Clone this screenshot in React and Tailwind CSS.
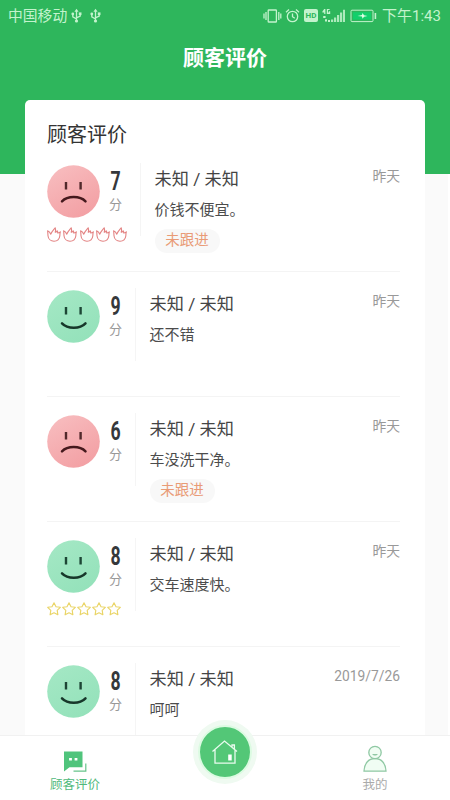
const reviews = [
  { id: 1, score: 7, mood: 'sad', text: '价钱不便宜。', date: '昨天', pending: true, marks: 'flame' },
  { id: 2, score: 9, mood: 'happy', text: '还不错', date: '昨天' },
  { id: 3, score: 6, mood: 'sad', text: '车没洗干净。', date: '昨天', pending: true },
  { id: 4, score: 8, mood: 'happy', text: '交车速度快。', date: '昨天', marks: 'star' },
  { id: 5, score: 8, mood: 'happy', text: '呵呵', date: '2019/7/26' },
];

function UsbIcon() {
  return (
    <svg width="11" height="16" viewBox="0 0 11 16" fill="none" stroke="currentColor" strokeWidth="1.3">
      <path d="M5.5 2.5V13M5.5 11L1.8 8.8V6M5.5 9.8L9.2 8V5.5" />
      <path d="M5.5 .8L7.6 3.8H3.4Z" fill="currentColor" stroke="none" />
      <circle cx="1.8" cy="6" r="1.4" fill="currentColor" stroke="none" />
      <path d="M7.8 4.4h2.7v2.7H7.8z" fill="currentColor" stroke="none" />
      <circle cx="5.5" cy="13" r="1.6" fill="currentColor" stroke="none" />
    </svg>
  );
}

function StatusBar() {
  return (
    <div className="flex h-[31px] items-center pl-2 pr-[11px] text-[14.8px] leading-none text-[#c3f3cd]">
      <span className="w-[59px] whitespace-nowrap pt-0.5">中国移动</span>
      <span className="ml-[4px] flex gap-2">
        <UsbIcon />
        <UsbIcon />
      </span>
      <div className="ml-auto flex items-center">
        <svg width="19" height="16" viewBox="0 0 19 16" fill="none" stroke="currentColor" strokeWidth="1.3">
          <rect x="5.2" y="2" width="8.2" height="12" rx=".6" />
          <path d="M3 4v8M15.8 4v8M1 5.5v5M17.8 5.5v5" />
        </svg>
        <svg className="ml-[3px]" width="15" height="16" viewBox="0 0 15 16" fill="none" stroke="currentColor" strokeWidth="1.3">
          <circle cx="7.5" cy="8.5" r="5.2" />
          <path d="M7.5 5.5v3.2l2.3 1.5M1 4.2L4 1.6M14 4.2L11 1.6" />
        </svg>
        <span className="ml-[4px] flex h-[13px] w-[14px] items-center justify-center rounded-[2px] bg-[#c3f3cd] text-[8px] font-bold text-[#2eb65c]">
          HD
        </span>
        <svg className="ml-1" width="24" height="16" viewBox="0 0 24 16" fill="currentColor">
          <path d="M3.4 1v5H2.2V4.6H.4V3.6L2.2 1zM4.8 1h2.8v1.1H6v2.3h.8V3.2h1.4V6H4.8z" />
          <path d="M1.2 8h2.4v2H1.2zM3 11.2h2v2.4H3zM6 12h2v2H6z" />
          <path d="M9 11.5h2.2V14H9zM12 9.5h2.2V14H12zM15 7h2.2v7H15zM18 4.5h2.2V14H18zM21 1.8h2V14h-2z" opacity=".85" />
        </svg>
        <svg className="ml-[4px]" width="27" height="14" viewBox="0 0 27 14" fill="none" stroke="currentColor">
          <rect x="1" y="1.2" width="22" height="11.4" rx="1" />
          <rect x="3" y="3.2" width="18" height="7.4" fill="#12cf6b" stroke="none" />
          <path d="M25.4 4v6" strokeWidth="1.6" />
          <path d="M7.5 7l4.5-1 .5-2 1.5 2.3L17.5 7 14 7.8l-1.5 2L12 7.6z" fill="#e3ffe6" stroke="none" />
        </svg>
        <span className="ml-[5px] w-[57px] whitespace-nowrap pt-0.5 text-[15px]">下午1:43</span>
      </div>
    </div>
  );
}

function Face({ mood }) {
  const sad = mood === 'sad';
  return (
    <svg className="block" width="53" height="53" viewBox="0 0 53 53" fill="none" strokeLinecap="round">
      <defs>
        <linearGradient id={`face-${mood}`} x1="0" y1="0" x2=".6" y2="1">
          <stop offset="0" stopColor={sad ? '#f8bfc1' : '#a5e8c5'} />
          <stop offset="1" stopColor={sad ? '#f3a1a5' : '#95e2bb'} />
        </linearGradient>
      </defs>
      <circle cx="26.5" cy="26.5" r="26.3" fill={`url(#face-${mood})`} />
      <path d="M19 17v7.4M33.6 17v7.4" stroke={sad ? '#51292b' : '#1d4535'} strokeWidth="2.4" strokeLinecap="butt" />
      {sad ? (
        <path d="M15 36.3C20.5 30.6 33 30.6 38.5 36.3" stroke="#45191d" strokeWidth="2.5" />
      ) : (
        <path d="M15 33.3C20.5 39.2 33 39.2 38.5 33.3" stroke="#17372a" strokeWidth="2.5" />
      )}
    </svg>
  );
}

function FlameIcon() {
  return (
    <svg width="14" height="15" viewBox="0 0 14 15" fill="none" stroke="#e38383" strokeWidth="1.1" strokeLinejoin="round">
      <path d="M8.2 .8C8.8 2.6 8.6 4 8.2 5.2C9 5.4 9.8 4.8 10.2 3.8C10.8 4.6 10.8 5.2 10.6 6C11.6 6 12.6 5.5 13.4 4.8C12.8 6 13 7.2 12.8 9C12.4 12.3 9.8 14.2 7 14.2C3.8 14.2 1.2 12 1 8.8C.9 7 .8 5.4 .6 3.8C2.1 4.4 3.2 5.6 3.8 7.2C4.6 4.8 6.4 3.2 8.2 .8Z" />
    </svg>
  );
}

function StarIcon() {
  return (
    <svg width="14" height="14" viewBox="0 0 14 14" fill="none" stroke="#ead568" strokeWidth="1.15" strokeLinejoin="round">
      <path d="M7 .8L9 4.7L13.3 5.3L10.2 8.4L10.9 12.8L7 10.8L3.1 12.8L3.8 8.4L.7 5.3L5 4.7Z" />
    </svg>
  );
}

function Marks({ type }) {
  const Icon = type === 'flame' ? FlameIcon : StarIcon;
  return (
    <div className={type === 'flame' ? 'mt-[9px] flex gap-[2.4px]' : 'mt-[9px] flex gap-px'}>
      {[0, 1, 2, 3, 4].map((n) => (
        <Icon key={n} />
      ))}
    </div>
  );
}

function ReviewRow({ review }) {
  return (
    <li className="flex h-[125px] border-b border-[#f4f4f4] pt-4">
      <div className={review.marks === 'flame' ? 'w-[93px] pt-0.5' : 'w-[88px] pt-0.5'}>
        <div className="flex">
          <Face mood={review.mood} />
          <div className="ml-[9px] flex w-[13px] flex-col items-center pt-[3px]">
            <span className="scale-x-[.68] font-[Roboto] text-[26px] font-bold leading-[26px] text-[#35383b]">{review.score}</span>
            <span className="mt-[3px] text-[13px] leading-[15px] text-[#999]">分</span>
          </div>
        </div>
        {review.marks && <Marks type={review.marks} />}
      </div>
      <div className="h-[73px] w-px bg-[#f5f5f5]" />
      <div className="ml-[13.5px] flex-1">
        <div className="flex justify-between">
          <h3 className="pt-1 text-[17.2px] leading-6 text-[#444]">未知 / 未知</h3>
          <time className="pt-px text-[13.8px] leading-6 text-[#999]">{review.date}</time>
        </div>
        <p className="mt-[8px] text-[15px] leading-[22px] text-[#4c4c4c]">{review.text}</p>
        {review.pending && (
          <span className="mt-[8px] flex h-6 w-[65px] items-center justify-center rounded-full bg-[#f8f8f8] pt-px text-[14.5px] leading-none text-[#e99b76]">
            未跟进
          </span>
        )}
      </div>
    </li>
  );
}

function BottomNav() {
  return (
    <nav className="relative flex h-[65px] shrink-0 justify-between border-t border-[#f1f1f1] bg-white">
      <a className="flex w-[150px] flex-col items-center pt-[15px] text-[12.5px] text-[#50b97b]">
        <svg width="24" height="22" viewBox="0 0 24 22" fill="none">
          <path d="M1 .5h18.5v15.8H6.5L1 20.5z" fill="#50c47c" />
          <path d="M6.1 8.2h2.8M11.6 8.2h2.8" stroke="#fff" strokeWidth="2.6" />
          <path d="M22.8 12.5v7.7H10.5" stroke="#67c48a" strokeWidth="1.2" />
        </svg>
        <span className="mt-[3px] leading-[17px]">顾客评价</span>
      </a>
      <a className="-mt-[16px] flex size-16 items-center justify-center rounded-full bg-[#effaf1]">
        <span className="flex size-[54px] items-center justify-center rounded-full border-2 border-[#dcfbe2] bg-[#53c777]">
          <svg width="28" height="26" viewBox="0 0 28 26" fill="none" stroke="#e9fbee" strokeWidth="1.3">
            <path d="M1.5 12.5L13.5 2L26 12.5M4 10.8V24.2H24V10.8M21 8V6H23.4V10" />
            <path d="M17.2 15.5h3.5v6h-3.5z" fill="#fff" stroke="none" />
          </svg>
        </span>
      </a>
      <a className="flex w-[150px] flex-col items-center pt-[9px] text-[12.5px] text-[#aaa]">
        <svg width="24" height="28" viewBox="0 0 24 28" fill="#f0fdf3" stroke="#8fc8a3" strokeWidth="1.3">
          <path d="M1 26.2C1.2 18.5 5.5 13.5 12 13.5S22.8 18.5 23 26.2Z" />
          <circle cx="12" cy="7.5" r="6.2" />
          <path d="M9.2 9C10.3 11 13.7 11 14.8 9Z" fill="#8fc8a3" stroke="none" />
        </svg>
        <span className="mt-[3px] leading-[17px]">我的</span>
      </a>
    </nav>
  );
}

export default function App() {
  return (
    <div className="flex h-[800px] w-[450px] flex-col overflow-hidden bg-white font-[Roboto,'Noto_Sans_CJK_SC',sans-serif]">
      <div className="mr-0.5 min-h-0 flex-1 overflow-y-clip bg-[#fafafa]">
        <header className="-mr-0.5 h-[174px] w-[450px] bg-[#2eb65c]">
          <StatusBar />
          <h1 className="pt-[13px] text-center text-[21px] font-bold leading-7 text-white">顾客评价</h1>
        </header>
        <main className="relative ml-[25px] -mt-[74px] w-[400px] rounded-[5px] bg-white px-[22px] pr-[25px] pt-5">
          <h2 className="h-[27px] text-[20px] leading-[30px] text-[#333]">顾客评价</h2>
          <ul>
            {reviews.map((review) => (
              <ReviewRow key={review.id} review={review} />
            ))}
          </ul>
        </main>
      </div>
      <BottomNav />
    </div>
  );
}
